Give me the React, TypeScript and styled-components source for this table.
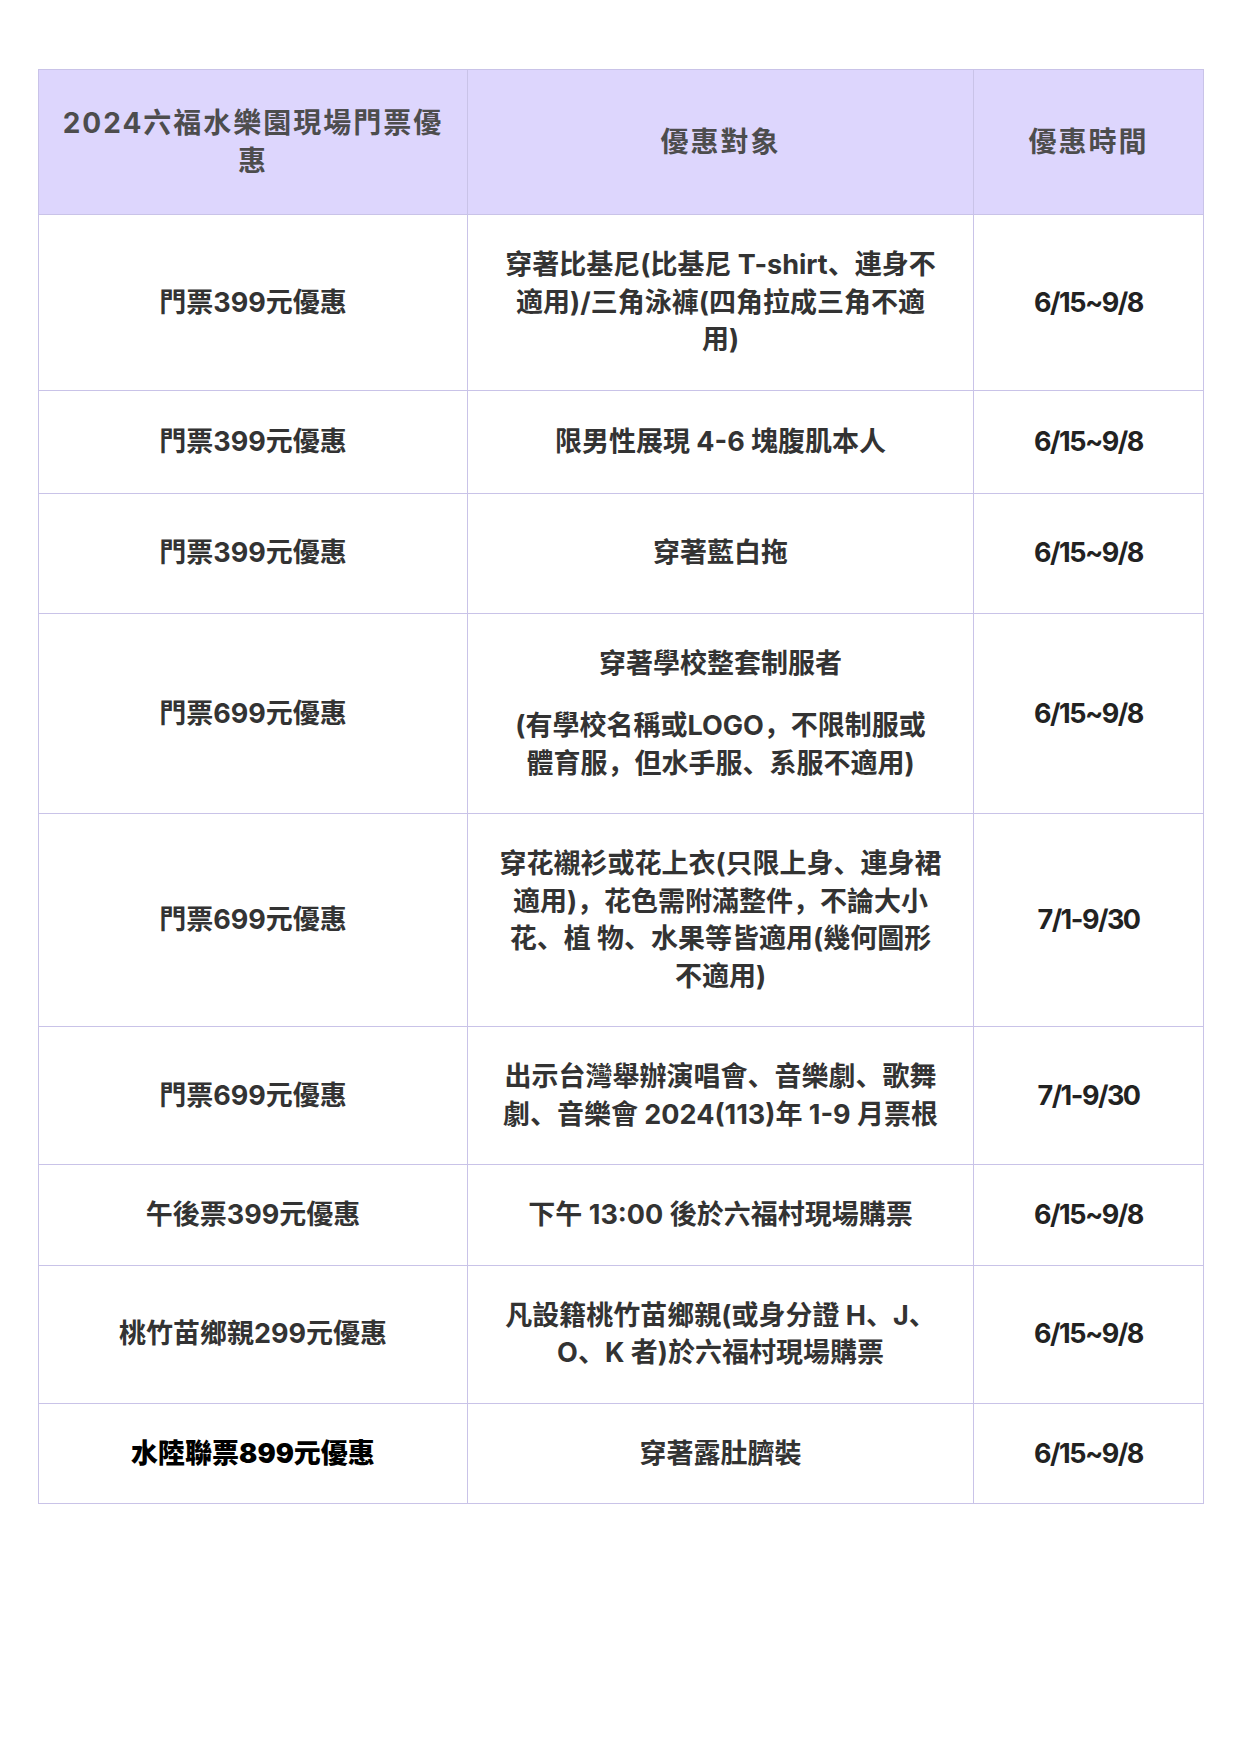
import React from "react";
import styled, { createGlobalStyle } from "styled-components";

const GlobalStyle = createGlobalStyle`
  html, body {
    margin: 0;
    padding: 0;
    background: #ffffff;
  }
  body {
    font-family: Inter, "Noto Sans CJK SC", "Noto Sans", sans-serif;
    color: #333333;
  }
`;

const Page = styled.div`
  width: 1241px;
  min-height: 1755px;
  box-sizing: border-box;
  padding: 69px 38px 0 38px;
`;

const Table = styled.table`
  width: 1165px;
  table-layout: fixed;
  border-collapse: collapse;
  border: 1.5px solid #c9c3e8;
`;

const HeadCell = styled.th`
  background: #ddd6fd;
  color: #4d4d4d;
  font-size: 28px;
  letter-spacing: 2px;
  font-weight: 700;
  line-height: 38px;
  text-align: center;
  vertical-align: middle;
  white-space: nowrap;
  padding: 34px 8px;
  border: 1.5px solid #c9c3e8;
`;

const Row = styled.tr<{ $h?: number }>`
  height: ${(p) => (p.$h ? `${p.$h}px` : "auto")};
`;

const Cell = styled.td<{ $tone?: "date" | "black" }>`
  font-size: 27px;
  font-weight: ${(p) => (p.$tone === "black" ? 900 : 700)};
  letter-spacing: ${(p) => (p.$tone === "date" ? "-1.5px" : "normal")};
  line-height: 37.5px;
  text-align: center;
  vertical-align: middle;
  padding: 31px 22px;
  color: ${(p) => (p.$tone === "black" ? "#000000" : p.$tone === "date" ? "#222222" : "#333333")};
  border: 1.5px solid #c9c3e8;
`;

const Para = styled.p`
  margin: 0;
  & + & {
    margin-top: 25px;
  }
`;

type Item = {
  title: string;
  target: React.ReactNode;
  time: string;
  h?: number;
  strong?: boolean;
};

const items: Item[] = [
  {
    title: "門票399元優惠",
    target: (
      <>
        穿著比基尼(比基尼 T-shirt、連身不
        <br />
        適用)/三角泳褲(四角拉成三角不適
        <br />
        用)
      </>
    ),
    time: "6/15~9/8",
  },
  { title: "門票399元優惠", target: "限男性展現 4-6 塊腹肌本人", time: "6/15~9/8", h: 103 },
  { title: "門票399元優惠", target: "穿著藍白拖", time: "6/15~9/8", h: 120 },
  {
    title: "門票699元優惠",
    target: (
      <>
        <Para>穿著學校整套制服者</Para>
        <Para>
          (有學校名稱或LOGO，不限制服或
          <br />
          體育服，但水手服、系服不適用)
        </Para>
      </>
    ),
    time: "6/15~9/8",
  },
  {
    title: "門票699元優惠",
    target: (
      <>
        穿花襯衫或花上衣(只限上身、連身裙
        <br />
        適用)，花色需附滿整件，不論大小
        <br />
        花、植 物、水果等皆適用(幾何圖形
        <br />
        不適用)
      </>
    ),
    time: "7/1-9/30",
  },
  {
    title: "門票699元優惠",
    target: (
      <>
        出示台灣舉辦演唱會、音樂劇、歌舞
        <br />
        劇、音樂會 2024(113)年 1-9 月票根
      </>
    ),
    time: "7/1-9/30",
  },
  { title: "午後票399元優惠", target: "下午 13:00 後於六福村現場購票", time: "6/15~9/8" },
  {
    title: "桃竹苗鄉親299元優惠",
    target: (
      <>
        凡設籍桃竹苗鄉親(或身分證 H、J、
        <br />
        O、K 者)於六福村現場購票
      </>
    ),
    time: "6/15~9/8",
  },
  { title: "水陸聯票899元優惠", target: "穿著露肚臍裝", time: "6/15~9/8", strong: true },
];

const App: React.FC = () => {
  return (
    <Page>
      <GlobalStyle />
      <Table>
        <colgroup>
          <col style={{ width: 429 }} />
          <col style={{ width: 506 }} />
          <col style={{ width: 230 }} />
        </colgroup>
        <thead>
          <tr>
            <HeadCell>
              2024六福水樂園現場門票優
              <br />
              惠
            </HeadCell>
            <HeadCell>優惠對象</HeadCell>
            <HeadCell>優惠時間</HeadCell>
          </tr>
        </thead>
        <tbody>
          {items.map((item, i) => (
            <Row key={i} $h={item.h}>
              <Cell $tone={item.strong ? "black" : undefined}>{item.title}</Cell>
              <Cell>{item.target}</Cell>
              <Cell $tone="date">{item.time}</Cell>
            </Row>
          ))}
        </tbody>
      </Table>
    </Page>
  );
};

export default App;
